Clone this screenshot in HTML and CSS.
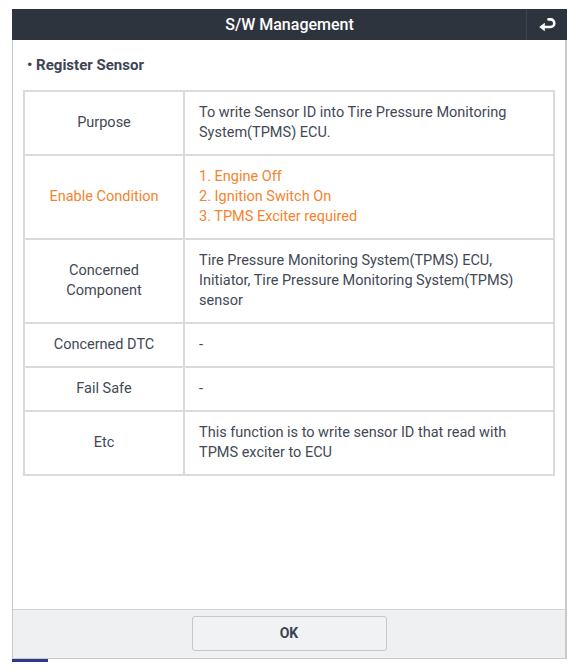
FILE: index.html
```html
<!DOCTYPE html>
<html lang="en">
<head>
    <meta charset="UTF-8">
    <meta name="viewport" content="width=device-width, initial-scale=1.0">
    <title>S/W Management</title>
    <link rel="stylesheet" href="styles.css">
</head>
<body>
    <div class="dialog">
        <div class="dialog-header">
            <span class="header-spacer"></span>
            <h1 class="dialog-title">S/W Management</h1>
            <button class="back-btn" type="button" aria-label="Back">
                <svg width="18" height="15" viewBox="0 0 18 15">
                    <path d="M6 10 H12.5 A3.8 3.8 0 0 0 12.5 2.4 H10.5" fill="none" stroke="#fff" stroke-width="2.6" stroke-linecap="round"/>
                    <path d="M1.2 10 L6.8 5.8 L6.8 14.2 Z" fill="#fff"/>
                </svg>
            </button>
        </div>

        <div class="dialog-body">
            <h2 class="section-title">&bull; Register Sensor</h2>

            <table class="info-table">
                <tr>
                    <th>Purpose</th>
                    <td>To write Sensor ID into Tire Pressure Monitoring System(TPMS) ECU.</td>
                </tr>
                <tr class="highlight">
                    <th>Enable Condition</th>
                    <td>1. Engine Off<br>2. Ignition Switch On<br>3. TPMS Exciter required</td>
                </tr>
                <tr>
                    <th>Concerned<br>Component</th>
                    <td>Tire Pressure Monitoring System(TPMS) ECU, Initiator, Tire Pressure Monitoring System(TPMS) sensor</td>
                </tr>
                <tr>
                    <th>Concerned DTC</th>
                    <td>-</td>
                </tr>
                <tr>
                    <th>Fail Safe</th>
                    <td>-</td>
                </tr>
                <tr>
                    <th>Etc</th>
                    <td>This function is to write sensor ID that read with TPMS exciter to ECU</td>
                </tr>
            </table>
        </div>

        <div class="dialog-footer">
            <button class="ok-btn" type="button">OK</button>
        </div>
    </div>
    <div class="taskbar-tab"></div>
</body>
</html>
```

FILE: styles.css
```css
* {
    margin: 0;
    padding: 0;
    box-sizing: border-box;
}

body {
    font-family: Roboto, "Liberation Sans", Arial, sans-serif;
    background-color: #fff;
    color: #424955;
    padding: 9px 10px 0 12px;
}

.dialog {
    width: 555px;
    height: 650px;
    display: flex;
    flex-direction: column;
    border-left: 1px solid #c9c9c9;
    border-right: 2px solid #c9c9c9;
    border-bottom: 1px solid #c9c9c9;
    background-color: #fff;
}

/* Barra de título */
.dialog-header {
    height: 31px;
    flex-shrink: 0;
    display: flex;
    align-items: stretch;
    background-color: #2e343e;
    margin-left: -1px;
    margin-right: -2px;
}

.header-spacer {
    width: 41px;
}

.dialog-title {
    flex: 1;
    color: #fff;
    font-size: 16px;
    font-weight: 500;
    line-height: 31px;
    text-align: center;
}

.back-btn {
    width: 41px;
    border: none;
    border-left: 1px solid #3e4450;
    background-color: #2e343e;
    display: flex;
    align-items: center;
    justify-content: center;
    cursor: pointer;
}

/* Conteúdo */
.dialog-body {
    flex: 1;
    padding: 16px 9px 0 10px;
}

.section-title {
    font-size: 15px;
    font-weight: 700;
    line-height: 18px;
    color: #3c4456;
    padding-left: 4px;
    margin-bottom: 16px;
}

.info-table {
    width: 532px;
    border-collapse: collapse;
    border: 2px solid #c4c4c4;
    font-size: 14.5px;
    line-height: 20px;
}

.info-table th,
.info-table td {
    border: 2px solid #dadada;
    padding: 11px 25px 11px 14px;
    vertical-align: middle;
    font-weight: 400;
}

.info-table th {
    width: 160px;
    padding: 11px 8px;
    text-align: center;
}

.info-table td {
    text-align: left;
}

.info-table tr.highlight th,
.info-table tr.highlight td {
    color: #f5832e;
}

/* Rodapé */
.dialog-footer {
    height: 49px;
    flex-shrink: 0;
    border-top: 1px solid #d3d3d3;
    background-color: #eff0f2;
    display: flex;
    justify-content: center;
    align-items: center;
    padding-bottom: 2px;
}

.ok-btn {
    width: 195px;
    height: 35px;
    background-color: #f1f2f4;
    border: 1px solid #c7c7c7;
    border-radius: 3px;
    font-family: Roboto, "Liberation Sans", Arial, sans-serif;
    font-size: 14px;
    font-weight: 700;
    color: #3c4350;
    cursor: pointer;
}

.taskbar-tab {
    width: 36px;
    height: 3px;
    background-color: #2d3a8e;
}
```
